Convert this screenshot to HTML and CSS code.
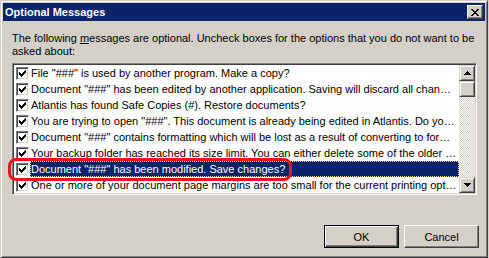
FILE: index.html
```html
<!DOCTYPE html>
<html lang="en">
<head>
  <meta charset="UTF-8" />
  <title>Optional Messages</title>
  <link rel="stylesheet" href="styles.css">
</head>
<body>
  <div class="window">
    <div class="titlebar">
      <span class="title">Optional Messages</span>
      <button class="close" title="Close">
        <svg width="8" height="7" viewBox="0 0 8 7"><path d="M0 0h2v1H0zM6 0h2v1H6zM1 1h2v1H1zM5 1h2v1H5zM2 2h4v1H2zM3 3h2v1H3zM2 4h4v1H2zM1 5h2v1H1zM5 5h2v1H5zM0 6h2v1H0zM6 6h2v1H6z"/></svg>
      </button>
    </div>

    <div class="body">
      <p class="intro">The following <u>m</u>essages are optional. Uncheck boxes for the options that you do not want to be asked about:</p>

      <div class="listbox">
        <ul class="items">
          <li><span class="chk"><svg width="11" height="11" viewBox="0 0 11 11"><path d="M2 4h1v3H2zM3 5h1v3H3zM4 6h1v3H4zM5 5h1v3H5zM6 4h1v3H6zM7 3h1v3H7zM8 2h1v3H8z"/></svg></span><span class="label">File "###" is used by another program. Make a copy?</span></li>
          <li><span class="chk"><svg width="11" height="11" viewBox="0 0 11 11"><path d="M2 4h1v3H2zM3 5h1v3H3zM4 6h1v3H4zM5 5h1v3H5zM6 4h1v3H6zM7 3h1v3H7zM8 2h1v3H8z"/></svg></span><span class="label">Document "###" has been edited by another application. Saving will discard all changes made there.</span></li>
          <li><span class="chk"><svg width="11" height="11" viewBox="0 0 11 11"><path d="M2 4h1v3H2zM3 5h1v3H3zM4 6h1v3H4zM5 5h1v3H5zM6 4h1v3H6zM7 3h1v3H7zM8 2h1v3H8z"/></svg></span><span class="label">Atlantis has found Safe Copies (#). Restore documents?</span></li>
          <li><span class="chk"><svg width="11" height="11" viewBox="0 0 11 11"><path d="M2 4h1v3H2zM3 5h1v3H3zM4 6h1v3H4zM5 5h1v3H5zM6 4h1v3H6zM7 3h1v3H7zM8 2h1v3H8z"/></svg></span><span class="label">You are trying to open "###". This document is already being edited in Atlantis. Do you want to open a copy?</span></li>
          <li><span class="chk"><svg width="11" height="11" viewBox="0 0 11 11"><path d="M2 4h1v3H2zM3 5h1v3H3zM4 6h1v3H4zM5 5h1v3H5zM6 4h1v3H6zM7 3h1v3H7zM8 2h1v3H8z"/></svg></span><span class="label">Document "###" contains formatting which will be lost as a result of converting to format "###".</span></li>
          <li><span class="chk"><svg width="11" height="11" viewBox="0 0 11 11"><path d="M2 4h1v3H2zM3 5h1v3H3zM4 6h1v3H4zM5 5h1v3H5zM6 4h1v3H6zM7 3h1v3H7zM8 2h1v3H8z"/></svg></span><span class="label">Your backup folder has reached its size limit. You can either delete some of the older backups or increase the limit.</span></li>
          <li class="sel"><span class="chk"><svg width="11" height="11" viewBox="0 0 11 11"><path d="M2 4h1v3H2zM3 5h1v3H3zM4 6h1v3H4zM5 5h1v3H5zM6 4h1v3H6zM7 3h1v3H7zM8 2h1v3H8z"/></svg></span><span class="label">Document "###" has been modified. Save changes?</span></li>
          <li><span class="chk"><svg width="11" height="11" viewBox="0 0 11 11"><path d="M2 4h1v3H2zM3 5h1v3H3zM4 6h1v3H4zM5 5h1v3H5zM6 4h1v3H6zM7 3h1v3H7zM8 2h1v3H8z"/></svg></span><span class="label">One or more of your document page margins are too small for the current printing options.</span></li>
        </ul>
        <div class="scrollbar">
          <div class="sb-btn"><svg width="7" height="4" viewBox="0 0 7 4"><path d="M3 0h1v1h1v1h1v1h1v1H0V3h1V2h1V1h1z"/></svg></div>
          <div class="sb-thumb"></div>
          <div class="sb-track"></div>
          <div class="sb-btn"><svg width="7" height="4" viewBox="0 0 7 4"><path d="M0 0h7v1H6v1H5v1H4v1H3V3H2V2H1V1H0z"/></svg></div>
        </div>
      </div>

      <div class="mark"></div>

      <div class="buttons">
        <button class="btn default">OK</button>
        <button class="btn">Cancel</button>
      </div>
    </div>
  </div>
</body>
</html>
```

FILE: styles.css
```css
body { margin: 0; background: #d4d0c8; font-family: "Liberation Sans", Arial, sans-serif; font-size: 11px; color: #000; }

.window { width: 488px; height: 258px; box-sizing: border-box; border: 1px solid; border-color: #d4d0c8 #404040 #404040 #d4d0c8; box-shadow: inset 1px 1px #fff, inset -1px -1px #808080; padding: 2px; display: flex; flex-direction: column; }

.titlebar { height: 18px; flex: none; background: #0a246a; color: #fff; display: flex; align-items: center; justify-content: space-between; padding: 0 2px; }
.title { font-weight: bold; font-size: 11px; line-height: 18px; }
.close { width: 16px; height: 14px; padding: 0; background: #d4d0c8; border: 1px solid; border-color: #fff #404040 #404040 #fff; box-shadow: inset -1px -1px #808080; display: flex; align-items: center; justify-content: center; }
.close svg { display: block; margin-left: 0; }

.body { position: relative; flex: 1; padding: 11px 6px 0 9px; }
.intro { margin: 0; width: 470px; line-height: 13px; }

.listbox { margin-top: 5px; width: 465px; height: 132px; box-sizing: border-box; border: 1px solid; border-color: #808080 #fff #fff #808080; box-shadow: inset 1px 1px #404040, inset -1px -1px #d4d0c8; padding: 1px; background: #fff; display: flex; }
.items { list-style: none; margin: 0; padding: 0; flex: 1; min-width: 0; overflow: hidden; }
.items li { display: flex; align-items: center; height: 16px; padding-left: 2px; }
.chk { width: 13px; height: 13px; flex: none; box-sizing: border-box; border: 1px solid; border-color: #808080 #fff #fff #808080; box-shadow: inset 1px 1px #404040, inset -1px -1px #d4d0c8; background: #fff; }
.chk svg { display: block; }
.label { flex: 1; min-width: 0; margin-left: 1px; height: 16px; line-height: 16px; padding: 0 2px 0 1px; white-space: nowrap; overflow: hidden; text-overflow: ellipsis; }
.sel .label { background: #0a246a; color: #fff; outline: 1px dotted #f5db95; outline-offset: -1px; }

.scrollbar { width: 16px; flex: none; display: flex; flex-direction: column; }
.sb-btn, .sb-thumb { height: 16px; flex: none; box-sizing: border-box; background: #d4d0c8; border: 1px solid; border-color: #d4d0c8 #404040 #404040 #d4d0c8; box-shadow: inset 1px 1px #fff, inset -1px -1px #808080; }
.sb-btn { display: flex; align-items: center; justify-content: center; }
.sb-btn svg { display: block; }
.sb-track { flex: 1; background: conic-gradient(#fff 25%, #d4d0c8 0 50%, #fff 0 75%, #d4d0c8 0) 0 0 / 2px 2px; }

.mark { position: absolute; left: 5px; top: 137px; width: 284px; height: 23px; box-sizing: border-box; border: 3px solid #e8141c; border-radius: 8px; }

.buttons { display: flex; justify-content: flex-end; gap: 5px; margin-top: 30px; }
.btn { width: 75px; height: 23px; padding: 0; font: 11px "Liberation Sans", Arial, sans-serif; color: #000; background: #d4d0c8; border: 1px solid; border-color: #fff #404040 #404040 #fff; box-shadow: inset -1px -1px #808080; }
.btn.default { border-color: #000; box-shadow: inset 1px 1px #fff, inset -1px -1px #404040, inset -2px -2px #808080; }
```
